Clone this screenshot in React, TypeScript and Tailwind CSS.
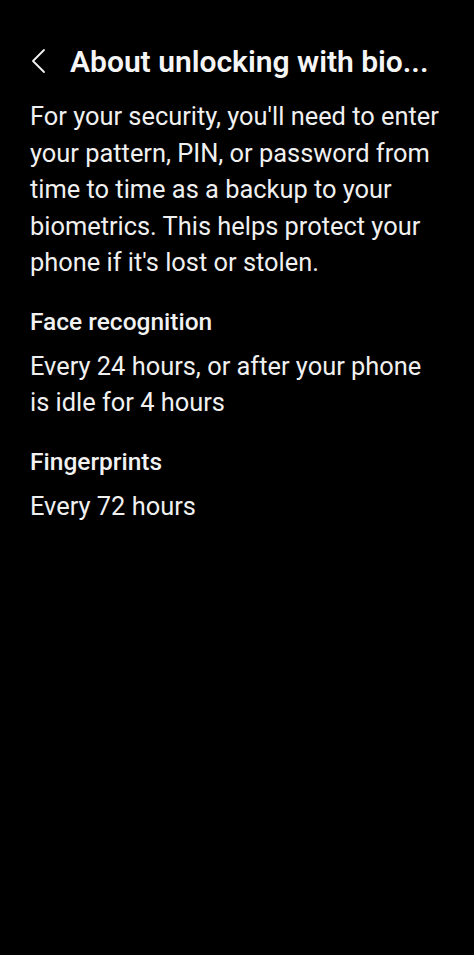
const font = { fontFamily: 'Roboto, "Noto Sans", sans-serif' }

function BackChevron() {
  return (
    <svg width="16" height="26" viewBox="0 0 16 26" fill="none" className="shrink-0">
      <polyline points="14,2 3,13 14,24" stroke="#f2f2f2" strokeWidth="1.8" strokeLinecap="round" strokeLinejoin="round" />
    </svg>
  )
}

function Section({ title, body }: { title: string; body: string }) {
  return (
    <div className="mt-[26px]">
      <h2 className="text-[24.5px] leading-[30px] font-medium text-[#f2f2f2]">{title}</h2>
      <p className="mt-[11px] text-[25.4px] leading-[36.5px] text-[#f0f0f0]">{body}</p>
    </div>
  )
}

export default function App() {
  return (
    <div className="w-[474px] h-[955px] bg-black overflow-hidden" style={font}>
      <header className="flex items-center h-[60px] mt-[31px] pl-[30px] pr-[20px]">
        <BackChevron />
        <h1 className="ml-[24px] text-[30px] font-semibold text-[#f5f5f5] whitespace-nowrap">
          About unlocking with bio...
        </h1>
      </header>
      <main className="px-[30px] pt-[7px]">
        <p className="text-[25.4px] leading-[36.5px] text-[#f0f0f0]">
          For your security, you'll need to enter your pattern, PIN, or password from time to time as a backup to your biometrics. This helps protect your phone if it's lost or stolen.
        </p>
        <Section title="Face recognition" body="Every 24 hours, or after your phone is idle for 4 hours" />
        <Section title="Fingerprints" body="Every 72 hours" />
      </main>
    </div>
  )
}
